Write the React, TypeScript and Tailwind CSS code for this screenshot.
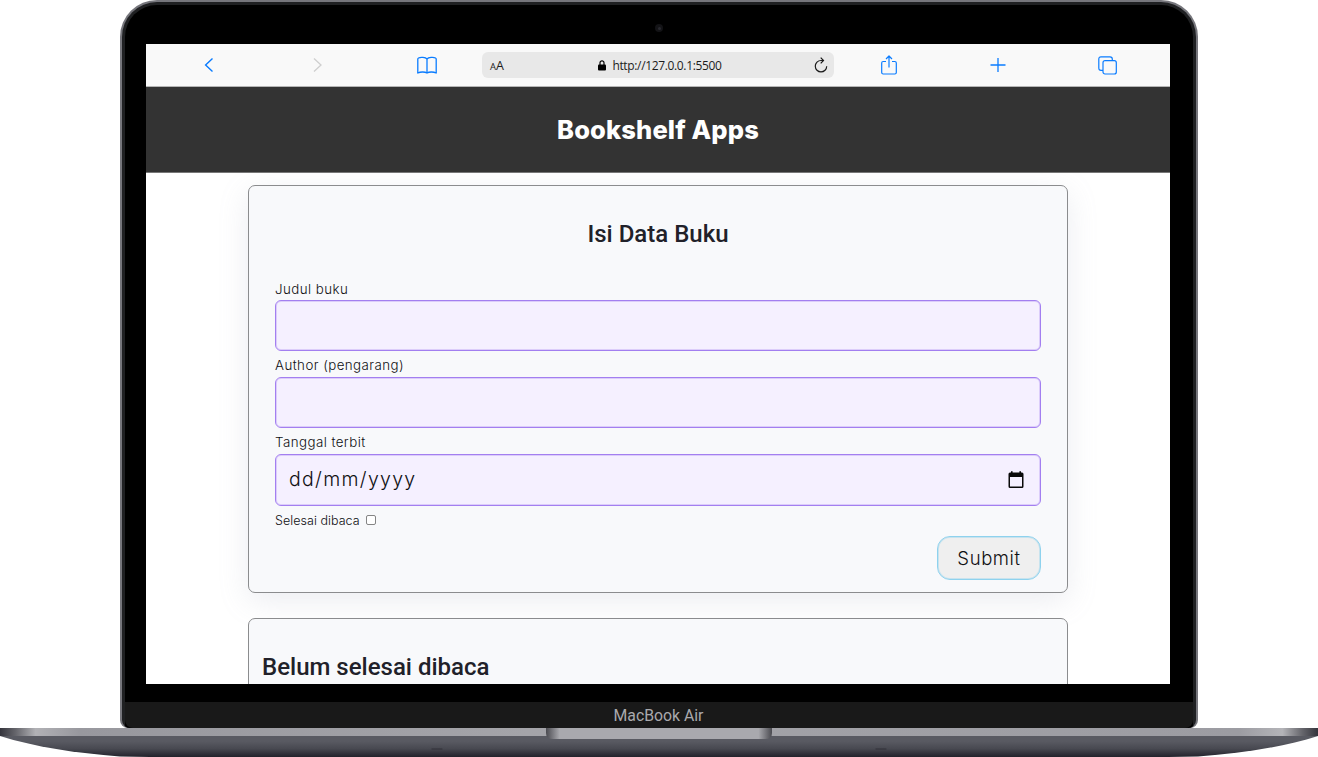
import type { ReactNode } from "react";

function Cell({ children }: { children: ReactNode }) {
  return <div className="flex flex-1 items-center justify-center">{children}</div>;
}

function Toolbar() {
  return (
    <div className="flex h-[43px] shrink-0 items-center border-b border-[#b5b5b5] bg-[#f9f9f9] pr-[8px] pl-[8px] text-[#0a7cff]">
      <Cell>
        <svg width="10" height="16" viewBox="0 0 10 16" fill="none" stroke="currentColor" strokeWidth="1.4">
          <path d="M8.500 1.500 1.600 8 8.500 14.500" />
        </svg>
      </Cell>
      <Cell>
        <svg width="10" height="16" viewBox="0 0 10 16" fill="none" stroke="#cfcfcf" strokeWidth="1.3">
          <path d="M1 1.500 8 8 1 14.500" />
        </svg>
      </Cell>
      <Cell>
        <svg width="20" height="18" viewBox="0 0 20 18" fill="none" stroke="currentColor" strokeWidth="1.3" strokeLinejoin="round">
          <path d="M10 3C8.500 1.200 3.500 1 1.500 2Q.8 2.400 .8 3V17C3.500 15.600 8 15.700 10 17 12 15.700 16.500 15.600 19.200 17V3Q19.200 2.400 18.500 2C16.500 1 11.500 1.200 10 3ZM10 3V17" />
        </svg>
      </Cell>
      <div className="flex h-[26px] w-[352px] items-center justify-between rounded-[6px] bg-[#e8e8e8] pr-[6px] pl-[8px] font-['Open_Sans',sans-serif] text-[#1c1c1c]">
        <span className="w-[72px] pt-[2px] text-[12.5px] leading-none">
          <span className="text-[9.5px]">A</span>A
        </span>
        <span className="flex items-center gap-[6px]">
          <svg width="8" height="11" viewBox="0 0 8 11" fill="none">
            <path d="M2 5V2.800A2 2 0 0 1 6 2.800V5" stroke="#000" strokeWidth="1.2" />
            <rect x="0" y="4.600" width="8" height="6" rx="1" fill="#000" />
          </svg>
          <span className="pt-[2px] text-[12px] leading-none tracking-[-0.35px]">http://127.0.0.1:5500</span>
        </span>
        <span className="flex w-[70px] justify-end">
          <svg width="14" height="17" viewBox="0 0 14 17" fill="none" stroke="#1c1c1c" strokeWidth="1.200">
            <path d="M12.700 9.200A5.700 5.700 0 1 1 7 3.500H9.200" />
            <path d="M6.700 .7 9.500 3.500 6.700 6.300" />
          </svg>
        </span>
      </div>
      <Cell>
        <svg width="16" height="20" viewBox="0 0 16 20" fill="none" stroke="currentColor" strokeWidth="1.200" strokeLinejoin="round">
          <path d="M5 6.500H2.200Q.7 6.500 .7 8V17.500Q.7 19 2.200 19H13.800Q15.300 19 15.300 17.500V8Q15.300 6.500 13.800 6.500H11" />
          <path d="M8 12.500V1M5 4 8 1 11 4" />
        </svg>
      </Cell>
      <Cell>
        <svg width="16" height="16" viewBox="0 0 16 16" stroke="currentColor" strokeWidth="1.300">
          <path d="M.5 8H15.500M8 .9V15" />
        </svg>
      </Cell>
      <Cell>
        <svg width="19" height="19" viewBox="0 0 19 19" fill="none" stroke="currentColor" strokeWidth="1.200">
          <path d="M5 14.300H3Q.8 14.300 .8 12V3Q.8 .8 3 .8H12Q14.300 .8 14.300 3V4.700" />
          <rect x="5" y="4.700" width="13.300" height="13.300" rx="2" />
        </svg>
      </Cell>
    </div>
  );
}

function Field({ label, labelClass, tall, children }: { label: string; labelClass: string; tall?: boolean; children?: ReactNode }) {
  return (
    <label className="flex flex-col">
      <span className={"flex h-[26px] items-center " + labelClass}>
        <span className="text-[13.3px] leading-none font-light whitespace-nowrap">{label}</span>
      </span>
      <span
        className={
          (tall ? "h-[52px] " : "h-[51px] ") +
          "flex items-center justify-between rounded-[6px] border border-[#a37ff0] bg-[#f5f0ff] pr-[16px] pl-[13px] shadow-[inset_0_0_0_1px_rgba(163,127,240,0.3)]"
        }
      >
        {children}
      </span>
    </label>
  );
}

function BookForm() {
  return (
    <section className="flex h-[408px] w-[820px] shrink-0 flex-col rounded-[7px] border border-[#8b8c8e] bg-[#f8f9fb] px-[26px] pt-[30px] font-['Inter',sans-serif] text-[#0f0f12] shadow-[0_8px_30px_rgba(149,157,175,0.18)]">
      <h2 className="mb-[22px] flex h-[36px] items-center justify-center font-['Roboto',sans-serif] text-[24px] leading-none font-medium text-[#212129]">
        Isi Data Buku
      </h2>
      <Field label="Judul buku" labelClass="pt-[5px] tracking-[0.45px]" />
      <Field label="Author (pengarang)" labelClass="pt-[3px] tracking-[0.45px]" />
      <Field label="Tanggal terbit" labelClass="pt-[3px] tracking-[0.45px]" tall>
        <span className="text-[19.5px] leading-none font-light tracking-[1.3px]">dd/mm/yyyy</span>
        <svg width="16" height="18" viewBox="0 0 16 18">
          <path d="M2 1.500H14Q15.500 1.500 15.500 3V15.500Q15.500 17 14 17H2Q.5 17 .5 15.500V3Q.5 1.500 2 1.500ZM2 6V15.500H14V6Z" fill="#0a0a0a" fillRule="evenodd" />
          <path d="M3.800 .3V3M12.200 .3V3" stroke="#0a0a0a" strokeWidth="1.600" />
        </svg>
      </Field>
      <div className="flex h-[30px] items-center gap-[6px]">
        <span className="text-[12.5px] leading-none font-light tracking-[0.05px] whitespace-nowrap">Selesai dibaca</span>
        <span className="mb-[3px] size-[10px] rounded-[2px] border border-[#858585] bg-white" />
      </div>
      <button className="flex h-[44px] w-[104px] items-center justify-center self-end rounded-[13px] border border-[#8ed2ee] bg-[#efefef] text-[18.500px] leading-none font-light tracking-[0.6px] shadow-[inset_0_0_0_1px_rgba(142,210,238,0.4)]">
        Submit
      </button>
    </section>
  );
}

function Base() {
  return (
    <svg width="1318" height="29" viewBox="0 0 1318 29" className="block">
      <defs>
        <linearGradient id="under" x1="0" y1="0" x2="0" y2="1">
          <stop offset="0.250" stopColor="#595a62" />
          <stop offset="0.600" stopColor="#484951" />
          <stop offset="1" stopColor="#22222b" />
        </linearGradient>
        <linearGradient id="edge" x1="0" y1="0" x2="1" y2="0">
          <stop offset="0" stopColor="#34343c" />
          <stop offset="0.012" stopColor="#66666c" />
          <stop offset="0.027" stopColor="#b1b1b5" />
          <stop offset="0.060" stopColor="#98989e" />
          <stop offset="0.400" stopColor="#a4a4a9" />
          <stop offset="0.940" stopColor="#9c9ca2" />
          <stop offset="0.973" stopColor="#b4b4b8" />
          <stop offset="0.988" stopColor="#66666c" />
          <stop offset="1" stopColor="#34343c" />
        </linearGradient>
        <linearGradient id="notch" x1="0" y1="0" x2="1" y2="0">
          <stop offset="0" stopColor="#4a4a50" />
          <stop offset="0.060" stopColor="#a9a9ae" />
          <stop offset="0.940" stopColor="#a9a9ae" />
          <stop offset="1" stopColor="#4a4a50" />
        </linearGradient>
      </defs>
      <path d="M0 8C35 19 75 25 120 28.500L150 29H1168L1198 28.500C1243 25 1283 19 1318 8Z" fill="url(#under)" />
      <rect width="1318" height="8" fill="url(#edge)" />
      <path d="M546 0H772V5Q772 11 765 11H553Q546 11 546 5Z" fill="url(#notch)" />
      <path d="M432 21H442M876 21H886" stroke="#303039" strokeWidth="1" strokeLinecap="round" />
    </svg>
  );
}

export default function App() {
  return (
    <div className="flex h-[757px] w-[1318px] flex-col items-center overflow-hidden bg-white">
      <div className="h-[728px] w-[1078px] rounded-t-[37px] rounded-b-[8px] bg-[#76767c] px-[2px] pt-[2px]">
        <div className="h-[726px] overflow-hidden rounded-t-[35px] rounded-b-[8px] bg-[#1f2022] px-[3px] pt-[3px]">
          <div className="flex h-[723px] flex-col items-center rounded-t-[32px] bg-black">
            <div className="flex h-[39px] items-center justify-center pt-[7px]">
              <span className="flex size-[8px] items-center justify-center rounded-full bg-[#131316]">
                <span className="size-[3px] rounded-full bg-[#29292f]" />
              </span>
            </div>
            <main className="mr-[2px] flex h-[640px] w-[1024px] flex-col overflow-hidden bg-white">
              <Toolbar />
              <header className="z-10 flex h-[86px] shrink-0 items-center justify-center border-b border-[#777] bg-[#333] pt-[1px]">
                <h1 className="font-['Inter',sans-serif] text-[25.5px] leading-none font-extrabold tracking-[0.15px] whitespace-nowrap text-white">
                  Bookshelf Apps
                </h1>
              </header>
              <div className="flex flex-col items-center gap-[25px] pt-[12px]">
                <BookForm />
                <section className="z-10 h-[200px] w-[820px] shrink-0 rounded-[7px] border border-[#8b8c8e] bg-[#f8f9fb] px-[13px] pt-[35px]">
                  <h2 className="font-['Roboto',sans-serif] text-[24px] leading-[26px] font-medium text-[#212129]">
                    Belum selesai dibaca
                  </h2>
                </section>
              </div>
            </main>
            <div className="h-[18px]" />
            <div className="flex h-[26px] w-full items-center justify-center rounded-b-[8px] bg-[#191919] pt-[2px] pr-[1px] font-['Roboto',sans-serif] text-[15.800px] leading-none text-[#a9a9ad]">
              MacBook Air
            </div>
          </div>
        </div>
      </div>
      <Base />
    </div>
  );
}
